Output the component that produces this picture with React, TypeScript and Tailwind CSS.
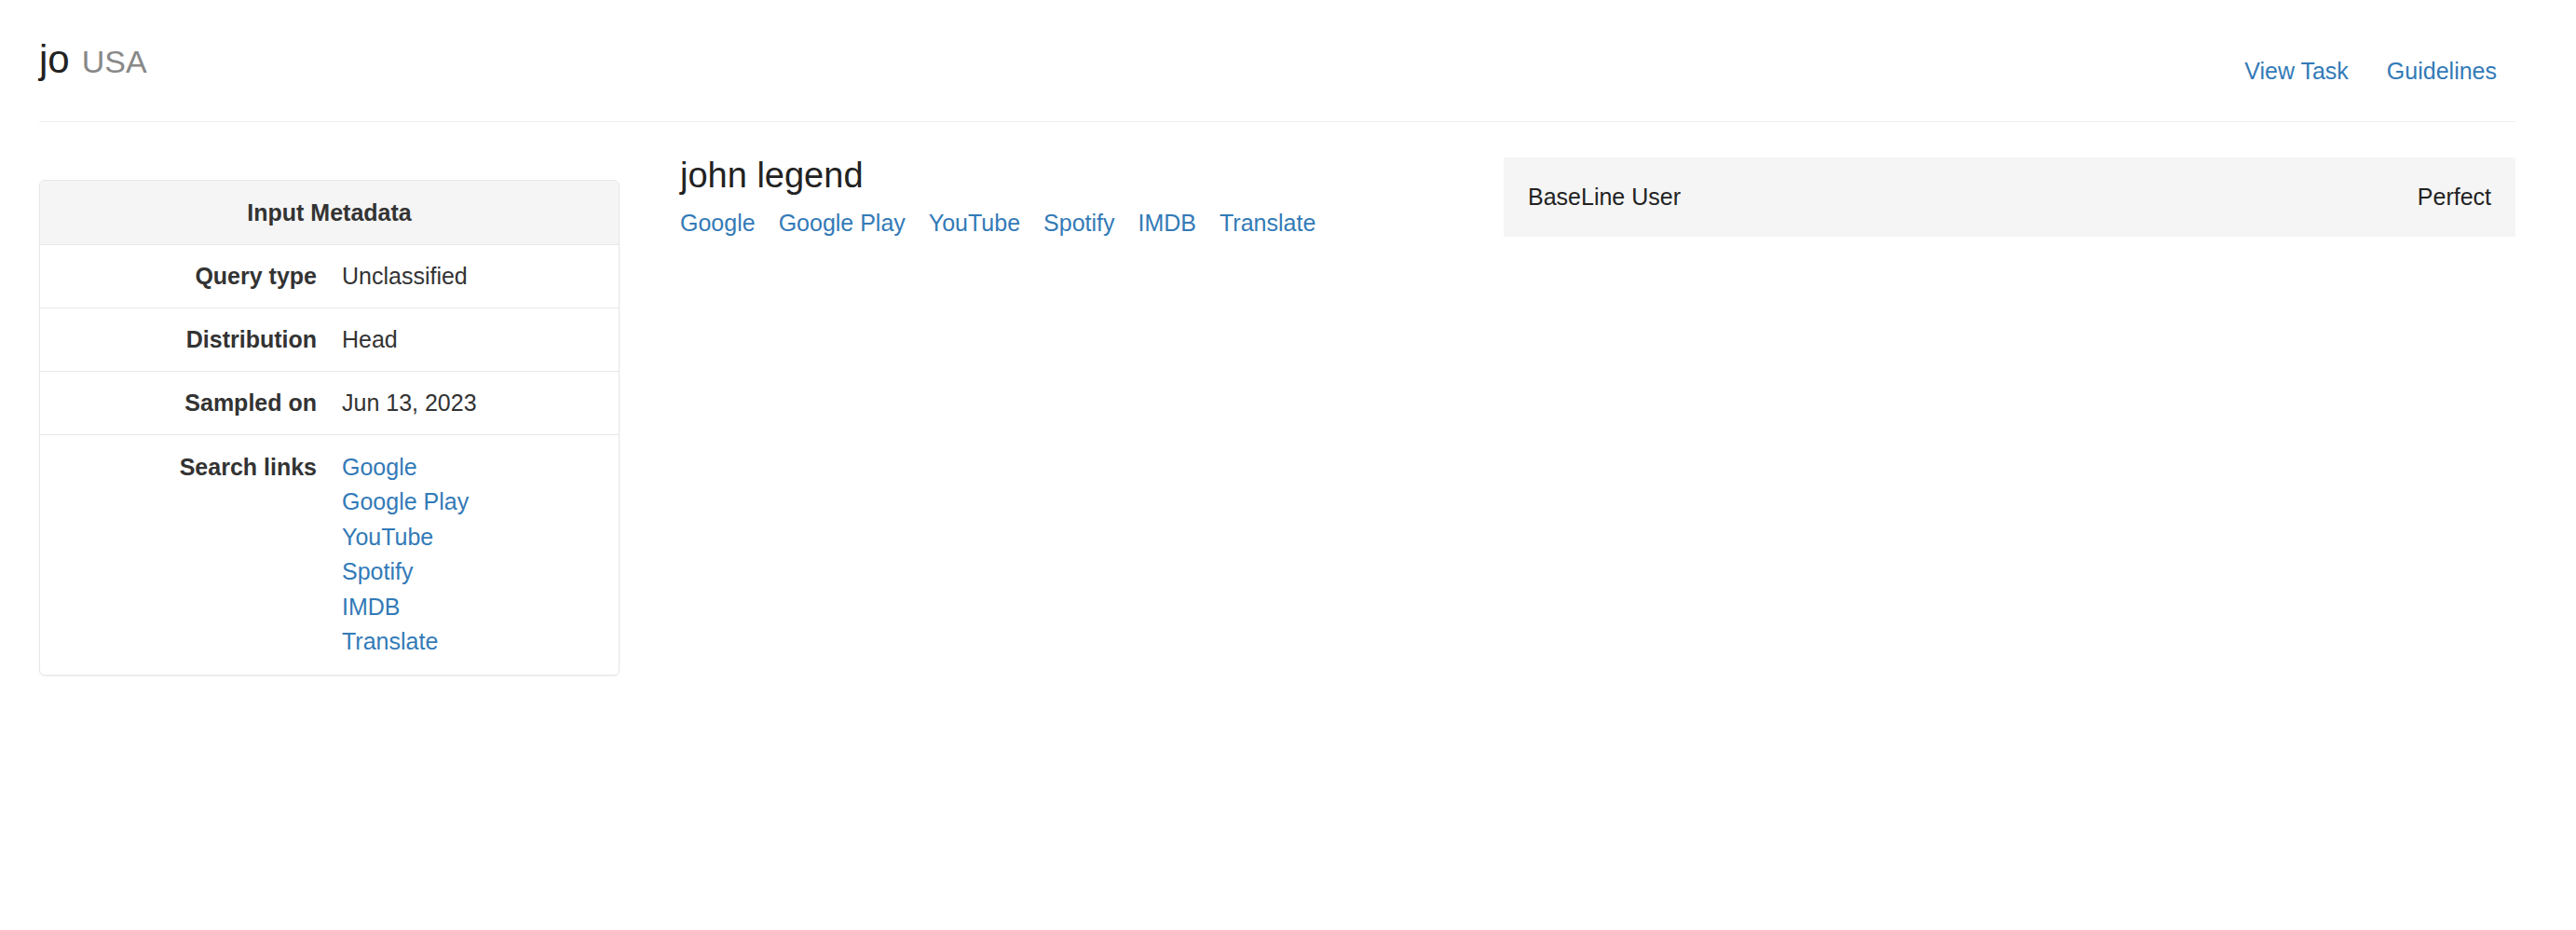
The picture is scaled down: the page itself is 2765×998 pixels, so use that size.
import React from "react";

const searchLinks = ["Google", "Google Play", "YouTube", "Spotify", "IMDB", "Translate"];

const metaRows = [
  { label: "Query type", value: "Unclassified" },
  { label: "Distribution", value: "Head" },
  { label: "Sampled on", value: "Jun 13, 2023" },
];

export default function App() {
  return (
    <div className="min-h-[998px] w-[2765px] bg-white pl-[42px] pr-[65px] font-['Liberation_Sans',Arial,sans-serif] text-[25px] text-[#333]">
      {/* header */}
      <header className="flex items-end justify-between border-b border-[#eeeeee] pb-[28px] pt-[40px]">
        <h1 className="mb-[9px] leading-[48px]">
          <span className="text-[42px] text-[#222]">jo</span>{" "}
          <span className="ml-[6px] text-[34px] text-[#888]">USA</span>
        </h1>
        <nav className="mb-[8px] mr-[20px] flex gap-[41px] leading-[35px]">
          <a className="text-[#337ab7]">View Task</a>
          <a className="text-[#337ab7]">Guidelines</a>
        </nav>
      </header>

      <main className="mt-[38px] flex items-start">
        {/* input metadata */}
        <section className="mt-[24px] w-[623px] overflow-hidden rounded-[6px] border border-[#e6e6e6] shadow-[0_1px_2px_rgba(0,0,0,0.06)]">
          <div className="bg-[#f5f5f5] py-[16px] text-center font-bold leading-[36px]">Input Metadata</div>
          {metaRows.map((row) => (
            <div key={row.label} className="flex border-t border-[#e8e8e8] py-[15px] leading-[37px]">
              <div className="w-[297px] text-right font-bold">{row.label}</div>
              <div className="pl-[27px]">{row.value}</div>
            </div>
          ))}
          <div className="flex border-t border-[#e8e8e8] pb-[17px] pt-[16px] leading-[37.4px]">
            <div className="w-[297px] text-right font-bold">Search links</div>
            <div className="flex flex-col pl-[27px]">
              {searchLinks.map((l) => (
                <a key={l} className="text-[#337ab7]">
                  {l}
                </a>
              ))}
            </div>
          </div>
        </section>

        {/* query */}
        <section className="-mt-[2px] ml-[65px] flex-1">
          <h2 className="text-[38px] leading-[42px] text-[#222]">john legend</h2>
          <div className="mt-[13px] flex gap-[25px] leading-[35px]">
            {searchLinks.map((l) => (
              <a key={l} className="text-[#337ab7]">
                {l}
              </a>
            ))}
          </div>
        </section>

        {/* rating */}
        <section className="flex w-[1086px] items-center justify-between bg-[#f5f5f5] px-[26px] py-[25px] leading-[35px] text-[#222]">
          <span>BaseLine User</span>
          <span>Perfect</span>
        </section>
      </main>
    </div>
  );
}
